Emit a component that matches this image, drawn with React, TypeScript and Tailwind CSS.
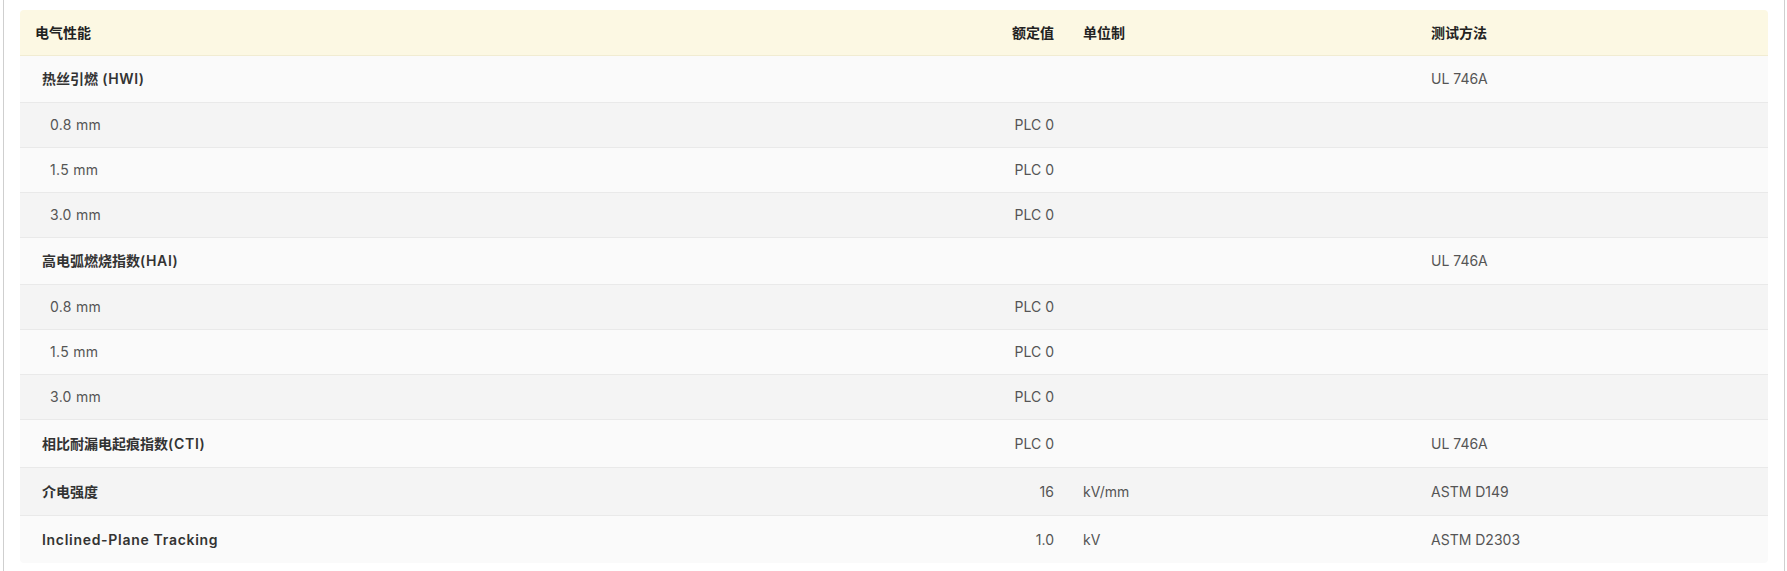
import React from 'react';

type Row = {
  label: string;
  value?: string;
  unit?: string;
  method?: string;
  sub?: boolean;
  tall?: boolean;
};

// 电气性能の表データ
const rows: Row[] = [
  { label: '热丝引燃 (HWI)', method: 'UL 746A' },
  { label: '0.8 mm', value: 'PLC 0', sub: true },
  { label: '1.5 mm', value: 'PLC 0', sub: true },
  { label: '3.0 mm', value: 'PLC 0', sub: true },
  { label: '高电弧燃烧指数(HAI)', method: 'UL 746A' },
  { label: '0.8 mm', value: 'PLC 0', sub: true },
  { label: '1.5 mm', value: 'PLC 0', sub: true },
  { label: '3.0 mm', value: 'PLC 0', sub: true },
  { label: '相比耐漏电起痕指数(CTI)', value: 'PLC 0', method: 'UL 746A', tall: true },
  { label: '介电强度', value: '16', unit: 'kV/mm', method: 'ASTM D149', tall: true },
  { label: 'Inclined-Plane Tracking', value: '1.0', unit: 'kV', method: 'ASTM D2303', tall: true },
];

// 英数字の部分だけ字間を広げる（Poppins の幅に寄せる）
function BoldLabel({ text }: { text: string }) {
  const parts = text.split(/([\x00-\x7F]+)/).filter(Boolean);
  return (
    <>
      {parts.map((p, i) =>
        /^[\x00-\x7F]+$/.test(p) ? (
          <span key={i} className="tracking-[0.7px]">
            {p}
          </span>
        ) : (
          <span key={i}>{p}</span>
        )
      )}
    </>
  );
}

export default function App() {
  return (
    <div className="min-h-[571px] bg-white text-[14px]">
      <div className="ml-[3px] mr-[2px] min-h-[571px] border-x border-[#cfcfcf] px-4 pt-[10px] font-['Inter','Noto_Sans_CJK_SC',sans-serif]">
        <table className="w-full table-fixed border-collapse overflow-hidden rounded-[4px]">
          <colgroup>
            <col className="w-[880px]" />
            <col className="w-[170px]" />
            <col className="w-[345px]" />
            <col />
          </colgroup>
          <thead>
            <tr className="h-[45px] bg-[#fcf8e3] text-[#222] border-b border-[#f1ecd2]">
              <th className="pl-[15px] text-left font-semibold">电气性能</th>
              <th className="pr-4 text-right font-semibold">额定值</th>
              <th className="pl-[13px] text-left font-semibold">单位制</th>
              <th className="pl-4 text-left font-semibold">测试方法</th>
            </tr>
          </thead>
          <tbody>
            {rows.map((r, i) => (
              <tr
                key={i}
                className={`border-t border-[#e9e9e9] ${
                  i % 2 === 0 ? 'bg-[#fafafa]' : 'bg-[#f4f4f4]'
                } ${r.sub ? 'h-[45px]' : r.tall ? 'h-[48px]' : 'h-[47px]'}`}
              >
                <td
                  className={
                    r.sub
                      ? 'pl-[30px] text-[#555] tracking-[0.3px]'
                      : 'pl-[22px] font-semibold text-[#333]'
                  }
                >
                  {r.sub ? r.label : <BoldLabel text={r.label} />}
                </td>
                <td className="pr-4 text-right text-[#555]">{r.value}</td>
                <td className="pl-[13px] text-[#555]">{r.unit}</td>
                <td className="pl-4 text-[#555]">{r.method}</td>
              </tr>
            ))}
          </tbody>
        </table>
      </div>
    </div>
  );
}
